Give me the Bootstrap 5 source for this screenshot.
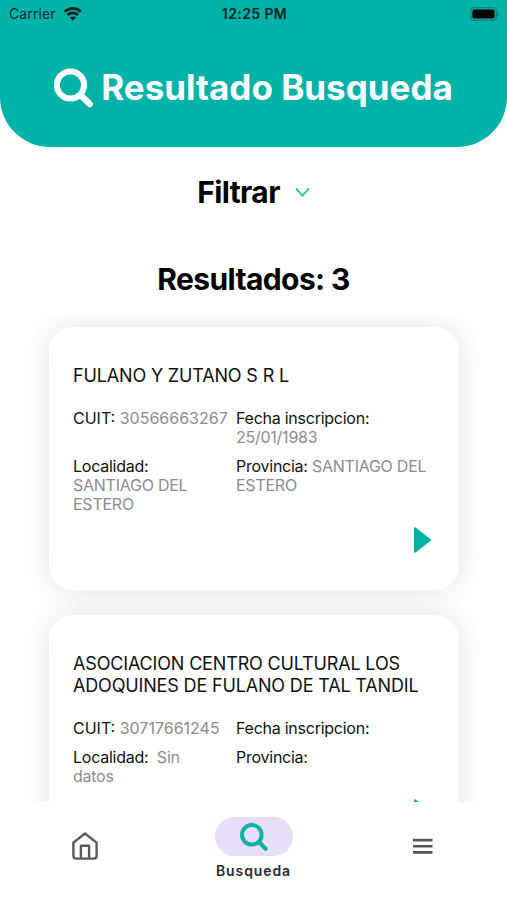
<!DOCTYPE html>
<html lang="es">
<head>
<meta charset="utf-8">
<meta name="viewport" content="width=device-width, initial-scale=1">
<title>Resultado Busqueda</title>
<link href="https://cdn.jsdelivr.net/npm/bootstrap@5.3.0/dist/css/bootstrap.min.css" rel="stylesheet">
<style>
body{font-family:Inter,"Liberation Sans",sans-serif;height:900px;overflow:hidden;color:#000;background:#fff}
svg{display:block;flex:none}
.app-head{height:147px;background:#00b2a7;border-radius:0 0 50px 50px}
.status{height:28px;padding:0 7px 0 9px;font-size:14px;line-height:28px;color:#0a2b29}
.carrier{letter-spacing:.1px}
.status .clock{font-weight:600;letter-spacing:.4px;color:#032523}
.side{flex:1 1 0}
.title-row{padding-top:38px;gap:7px}
.page-title{font-size:35px;line-height:42px;font-weight:700}
.heading-row{font-size:30px;line-height:36px;font-weight:700;letter-spacing:-.6px}
.filter-row{margin-top:27px;gap:15px}
.count-row{margin-top:51px}
.results{height:487px;margin-top:18px;padding:12px 48px 0 49px;gap:25px}
.result-card{height:263px;flex:none;border-radius:24px;background:#fff;box-shadow:0 0 28px rgba(0,0,0,.115);padding:38px 24px 0}
.result-name{font-size:18px;line-height:22px;letter-spacing:-.16px;color:#111;margin-bottom:22px;white-space:nowrap}
.fields{font-size:16px;line-height:19px;letter-spacing:-.25px;color:#8c8c8c;display:grid;grid-template-columns:163px 1fr;row-gap:10px}
.fields b{font-weight:400;color:#111}
.fields span{white-space:nowrap}
.fields .cuit{letter-spacing:0}
.go{margin:12px 3px 0 auto}
.tabs{height:98px;background:#fff}
.tab-item{width:169px}
.tab-home{padding-top:29px}
.tab-search{padding-top:15px}
.tab-menu{padding-top:36px}
.pill{width:78px;height:39px;border-radius:20px;background:#e6dff7}
.tab-text{font-size:14px;line-height:18px;font-weight:600;letter-spacing:.9px;color:#2b2b2b;margin-top:6px}
</style>
<script src="https://cdn.jsdelivr.net/npm/bootstrap@5.3.0/dist/js/bootstrap.bundle.min.js"></script>
</head>
<body class="d-flex flex-column">
<header class="app-head">
  <div class="status d-flex align-items-center">
    <div class="side d-flex align-items-center"><span class="carrier">Carrier</span>
      <svg class="ms-2" width="18" height="14" viewBox="0 0 18 14" fill="none" stroke="#04211f" stroke-width="2.6"><path d="M.7 4.700C5.400.2 12.200.2 16.900 4.700M3.600 8c3-2.800 7.400-2.800 10.400 0"/><path d="M8.800 13.700 5.700 10.500c1.800-1.500 4.400-1.500 6.200 0z" fill="#04211f" stroke="none"/></svg>
    </div>
    <span class="clock">12:25 PM</span>
    <div class="side d-flex justify-content-end">
      <svg width="30" height="14" viewBox="0 0 30 14"><rect x=".7" y=".7" width="25.600" height="12.600" rx="3.500" fill="none" stroke="#058078" stroke-width="1.200"/><rect x="2.400" y="2.400" width="22.200" height="9.200" rx="2" fill="#000"/><path d="M27.500 4.600c2 .8 2 4 0 4.800z" fill="#058078"/></svg>
    </div>
  </div>
  <div class="title-row d-flex justify-content-center">
    <svg width="40" height="42" viewBox="0 0 40 42" fill="none" stroke="#fff"><circle cx="16.500" cy="19" r="13.600" stroke-width="6"/><path d="m27 29.500 8.700 8.500" stroke-width="6.400" stroke-linecap="round"/></svg>
    <h1 class="page-title text-white mb-0">Resultado Busqueda</h1>
  </div>
</header>
<main>
  <div class="heading-row filter-row d-flex justify-content-center align-items-center"><span>Filtrar</span>
    <svg width="15" height="11" viewBox="0 0 15 11" fill="none" stroke="#19b9ae" stroke-width="1.600"><path d="m1 1.200 6.500 7.600L14 1.200"/></svg>
  </div>
  <h2 class="heading-row count-row text-center mb-0">Resultados: 3</h2>
  <section class="results d-flex flex-column overflow-hidden">
    <article class="result-card">
      <h3 class="result-name fw-normal">FULANO Y ZUTANO S R L</h3>
      <div class="fields">
        <span class="cuit"><b>CUIT:</b> 30566663267</span>
        <span><b>Fecha inscripcion:</b><br>25/01/1983</span>
        <span><b>Localidad:</b><br>SANTIAGO DEL<br>ESTERO</span>
        <span><b>Provincia:</b> SANTIAGO DEL<br>ESTERO</span>
      </div>
      <svg class="go" width="19" height="28" viewBox="0 0 19 28"><path d="M2 2.200 17 14 2 25.800z" fill="#00b2a7" stroke="#00b2a7" stroke-width="2" stroke-linejoin="round"/></svg>
    </article>
    <article class="result-card">
      <h3 class="result-name fw-normal">ASOCIACION CENTRO CULTURAL LOS<br>ADOQUINES DE FULANO DE TAL TANDIL</h3>
      <div class="fields">
        <span class="cuit"><b>CUIT:</b> 30717661245</span>
        <span><b>Fecha inscripcion:</b></span>
        <span><b>Localidad:</b>&nbsp; Sin<br>datos</span>
        <span><b>Provincia:</b></span>
      </div>
      <svg class="go" width="19" height="28" viewBox="0 0 19 28"><path d="M2 2.200 17 14 2 25.800z" fill="#00b2a7" stroke="#00b2a7" stroke-width="2" stroke-linejoin="round"/></svg>
    </article>
  </section>
</main>
<nav class="tabs d-flex justify-content-between">
  <div class="tab-item tab-home d-flex justify-content-center">
    <svg width="28" height="30" viewBox="0 0 28 30" fill="none" stroke="#5a5a5a" stroke-width="2.400" stroke-linejoin="round"><path d="M2.400 11.600 14 2.500l11.600 9.100v13.200a2.800 2.800 0 0 1-2.800 2.800H5.200a2.800 2.800 0 0 1-2.800-2.800z"/><path d="M9.900 27.600V14.800h8.200v12.800"/></svg>
  </div>
  <div class="tab-item tab-search d-flex flex-column align-items-center">
    <div class="pill d-flex align-items-center justify-content-center">
      <svg width="28" height="28" viewBox="0 0 28 28" fill="none" stroke="#0bb1a4"><circle cx="11.800" cy="11.800" r="9.800" stroke-width="4"/><path d="m19.300 19.300 6.200 6.400" stroke-width="4.200" stroke-linecap="round"/></svg>
    </div>
    <span class="tab-text">Busqueda</span>
  </div>
  <div class="tab-item tab-menu d-flex justify-content-center">
    <svg width="20" height="17" viewBox="0 0 20 17" fill="#555"><path d="M0 .8h19.500v2.700H0zM0 6.900h19.500v2.700H0zM0 13h19.500v2.700H0z"/></svg>
  </div>
</nav>
</body>
</html>
